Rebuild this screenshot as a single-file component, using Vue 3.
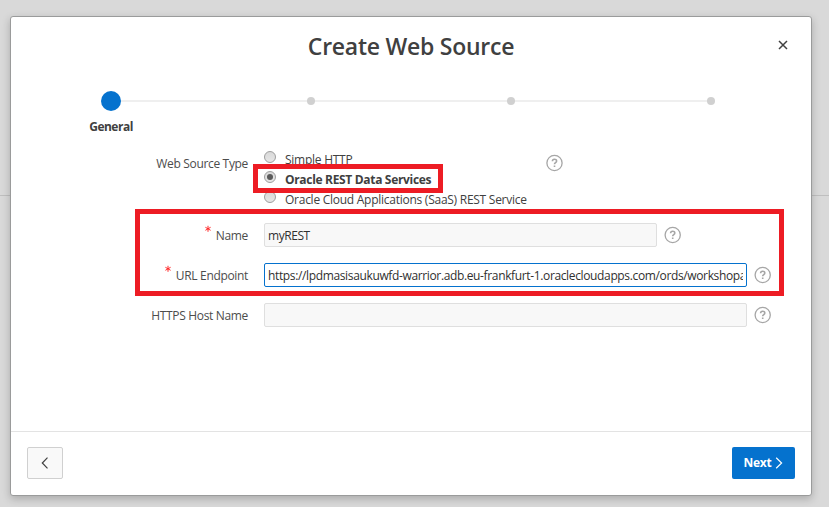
<script setup>
import { ref } from 'vue'

const steps = ['General', '', '', '']
const sourceType = ref(1)
const sourceTypes = ['Simple HTTP', 'Oracle REST Data Services', 'Oracle Cloud Applications (SaaS) REST Service']
const fields = ref([
  { key: 'name', label: 'Name', value: 'myREST', required: true },
  { key: 'url', label: 'URL Endpoint', value: 'https://lpdmasisaukuwfd-warrior.adb.eu-frankfurt-1.oraclecloudapps.com/ords/workshopa', required: true, focused: true },
  { key: 'host', label: 'HTTPS Host Name', value: '', required: false },
])
</script>

<template>
  <div class="page">
    <div class="page-rule"></div>
    <section class="dialog">
      <header class="header">
        <h1 class="title">Create Web Source</h1>
        <button class="close" aria-label="Close">
          <svg width="10" height="10" viewBox="0 0 10 10"><path d="M1 1L9 9M9 1L1 9" /></svg>
        </button>
      </header>

      <ol class="steps">
        <li v-for="(step, i) in steps" :key="i" class="step" :class="{ current: i === 0 }">
          <span class="track"><span class="marker"></span></span>
          <span class="step-label">{{ step }}</span>
        </li>
      </ol>

      <div class="form">
        <div class="row types">
          <span class="label"><span class="label-text">Web Source Type</span></span>
          <div class="options">
            <label v-for="(t, i) in sourceTypes" :key="t" class="option" :class="['o' + i, { checked: i === sourceType }]">
              <span class="radio" @click="sourceType = i"></span>
              <span class="option-text">{{ t }}</span>
            </label>
          </div>
          <svg class="help" width="18" height="18" viewBox="0 0 18 18">
            <circle cx="8.5" cy="9" r="7.6" />
            <path d="M6.4 7.3C6.4 4.5 10.6 4.6 10.6 7C10.6 8.6 8.5 8.5 8.5 10.2M8.5 11.6V13" />
          </svg>
        </div>
        <div v-for="f in fields" :key="f.key" class="row">
          <span class="label">
            <svg v-if="f.required" class="star" width="6" height="8" viewBox="0 0 6 8"><path d="M3 .8V6.8M.4 2.3L5.6 5.3M5.6 2.3L.4 5.3" /></svg>
            <span class="label-text">{{ f.label }}</span>
          </span>
          <input v-model="f.value" class="input" :class="['in-' + f.key, { focused: f.focused }]" type="text" spellcheck="false" />
          <svg class="help" width="18" height="18" viewBox="0 0 18 18">
            <circle cx="8.7" cy="9" r="7.6" />
            <path d="M6.6 7.3C6.6 4.5 10.8 4.6 10.8 7C10.8 8.6 8.7 8.5 8.7 10.2M8.7 11.6V13" />
          </svg>
        </div>
      </div>

      <footer class="footer">
        <button class="btn back" aria-label="Back">
          <svg width="8" height="12" viewBox="0 0 8 12"><path d="M6.5 .7L1.3 6L6.5 11.3" /></svg>
        </button>
        <button class="btn next">
          <span>Next</span>
          <svg width="8" height="12" viewBox="0 0 8 12"><path d="M1.2 .7L6.6 6L1.2 11.3" /></svg>
        </button>
      </footer>
    </section>
    <div class="highlight highlight-type"></div>
    <div class="highlight highlight-fields"></div>
  </div>
</template>

<style>
body { margin: 0; background: #d9d9d9; }
</style>

<style scoped>
.page {
  position: relative;
  box-sizing: border-box;
  width: 829px;
  height: 507px;
  padding: 16px 0 0 10px;
  overflow: hidden;
  background: #d9d9d9;
  color: #404040;
  font: 12px/20px "Open Sans", "Noto Sans", sans-serif;
}
.page *, .page *::before { box-sizing: border-box; }
.page-rule { position: absolute; left: 0; top: 195px; width: 100%; height: 1px; background: #bfbfbf; }
.dialog {
  position: relative;
  display: flex;
  flex-direction: column;
  width: 802px;
  height: 480px;
  border: 1px solid #9a9b9b;
  border-radius: 3px;
  background: #fff;
  box-shadow: 0 3px 8px rgba(0, 0, 0, .22);
}
.header { display: grid; grid-template-columns: 1fr auto 1fr; align-items: center; height: 60px; padding-right: 23px; padding-left: 23px; }
.title { grid-column: 2; margin: -2px 0 0; font-size: 23px; line-height: 32px; font-weight: 600; letter-spacing: -.25px; white-space: nowrap; }
.close { justify-self: end; display: flex; margin-top: -4px; padding: 0; border: 0; background: none; }
.close svg { stroke: #404040; stroke-width: 1.5; fill: none; }
.steps { display: flex; margin: 0; padding: 13px 0 0; list-style: none; height: 66px; }
.step { display: flex; flex-direction: column; align-items: center; width: 200px; }
.track { display: flex; align-items: center; justify-content: center; width: 100%; height: 22px; background: linear-gradient(#efefef, #efefef) center / 100% 2px no-repeat; }
.step:first-child .track { background-position: right center; background-size: 50% 2px; }
.step:last-child .track { background-position: left center; background-size: 50% 2px; }
.marker { width: 8px; height: 8px; border-radius: 50%; background: #d0d0d0; }
.current .marker { width: 20px; height: 20px; background: #0572ce; }
.step-label { margin-top: 5px; font-weight: 700; letter-spacing: -.5px; }
.form { flex: 1; display: flex; flex-direction: column; }
.row { display: flex; align-items: center; height: 40px; }
.types { align-items: flex-start; height: 72px; padding-top: 7px; }
.label { display: flex; justify-content: flex-end; width: 237px; margin-right: 16px; padding-top: 1px; color: #4c4c4c; letter-spacing: -.33px; white-space: nowrap; }
.types .label { padding-top: 4px; }
.star { margin: -1px 5px 0 0; stroke: #ff2b2b; stroke-width: 1; fill: none; }
.options { width: 282px; }
.option { display: flex; height: 20px; letter-spacing: -.26px; white-space: nowrap; }
.radio { display: flex; align-items: center; justify-content: center; width: 12px; height: 12px; margin: 1px 9px 0 0; border: 1px solid #9e9e9e; border-radius: 50%; background: linear-gradient(#d9d9d9, #e6e6e6); }
.checked .radio::before { content: ""; width: 6px; height: 6px; border-radius: 50%; background: #5a5a5a; }
.checked { font-weight: 700; letter-spacing: -.32px; }
.help { flex: none; stroke: #a6a6a6; stroke-width: 1.3; fill: none; }
.help path { stroke-width: 1.6; }
.types .help { margin-top: 4px; }
.input {
  height: 24px;
  width: 483px;
  margin: 0 7px 0 0;
  padding: 1px 3px 0;
  border: 1px solid #dfdfdf;
  border-radius: 2px;
  background: #f8f8f8;
  color: #303030;
  font: inherit;
  letter-spacing: -.36px;
  outline: 0;
}
.in-name { width: 393px; letter-spacing: -.45px; }
.input.focused { border-color: #0572ce; background: #fff; }
.footer { display: flex; justify-content: space-between; align-items: center; height: 64px; padding: 0 16px 2px; border-top: 1px solid #e3e3e3; }
.btn { display: flex; align-items: center; justify-content: center; height: 32px; padding: 0; border-radius: 2px; font: inherit; }
.btn svg { fill: none; stroke: currentColor; stroke-width: 1.2; }
.back { width: 36px; border: 1px solid #d0d0d0; background: #f9f9f9; color: #404040; }
.next { width: 63px; gap: 4px; border: 0; background: #0572ce; color: #fff; font-weight: 700; letter-spacing: -.3px; }
.highlight { position: absolute; border: 5px solid #ed1c24; pointer-events: none; }
.highlight-type { left: 253px; top: 164px; width: 190px; height: 29px; }
.highlight-fields { left: 135px; top: 209px; width: 649px; height: 87px; }
</style>
